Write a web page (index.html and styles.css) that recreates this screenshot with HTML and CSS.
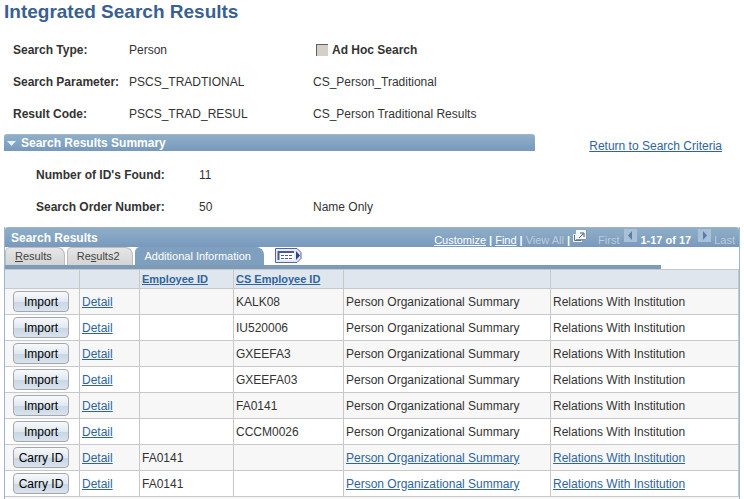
FILE: index.html
```html
<!DOCTYPE html>
<html lang="en">
<head>
    <meta charset="UTF-8">
    <title>Integrated Search Results</title>
    <link rel="stylesheet" href="styles.css">
</head>
<body>
    <h1>Integrated Search Results</h1>

    <dl class="fields">
        <dt>Search Type:</dt>
        <dd>Person</dd>
        <dd class="check">
            <input type="checkbox" id="adhoc" disabled>
            <label for="adhoc">Ad Hoc Search</label>
        </dd>
        <dt>Search Parameter:</dt>
        <dd>PSCS_TRADTIONAL</dd>
        <dd>CS_Person_Traditional</dd>
        <dt>Result Code:</dt>
        <dd>PSCS_TRAD_RESUL</dd>
        <dd>CS_Person Traditional Results</dd>
    </dl>

    <div class="summary-head">
        <h2 class="bar">
            <svg width="9" height="5" viewBox="0 0 9 5"><path d="M0 0h9L4.500 5z" fill="#e4f4fa"/></svg>
            Search Results Summary
        </h2>
        <a href="#">Return to Search Criteria</a>
    </div>
    <dl class="fields summary">
        <dt>Number of ID's Found:</dt>
        <dd>11</dd>
        <dd></dd>
        <dt>Search Order Number:</dt>
        <dd>50</dd>
        <dd>Name Only</dd>
    </dl>

    <div class="results">
        <div class="bar results-bar">
            <h2>Search Results</h2>
            <div class="nav">
                <a href="#">Customize</a>
                <b>|</b>
                <a href="#">Find</a>
                <b>|</b>
                <span class="off">View All</span>
                <b>|</b>
                <a href="#" class="popup" aria-label="Open in new window">
                    <svg width="14" height="12" viewBox="0 0 14 12">
                        <path d="M0 4h9v8H0z" fill="#eef3f7"/>
                        <path d="M1.500 5v5.500h7" fill="none" stroke="#5d7183"/>
                        <path d="M3 0h11v10H3z" fill="#f4f7f9"/>
                        <path d="M13.500 0v9.500H3" fill="none" stroke="#8095a6"/>
                        <path d="M6 8l4-4M7 3h4v4" fill="none" stroke="#405569"/>
                    </svg>
                </a>
                <span class="off first">First</span>
                <button class="page" disabled aria-label="Previous"><svg width="13" height="13" viewBox="0 0 13 13"><path d="M8 2v9L4 6.500z" fill="#5580a8"/></svg></button>
                <b class="count">1-17 of 17</b>
                <button class="page" disabled aria-label="Next"><svg width="13" height="13" viewBox="0 0 13 13"><path d="M5 2v9l4-4.500z" fill="#4f80b4"/></svg></button>
                <span class="off">Last</span>
            </div>
        </div>
        <div class="tabs">
            <a href="#" class="tab"><u>R</u>esults</a>
            <a href="#" class="tab">Re<u>s</u>ults2</a>
            <a href="#" class="tab active">Additional Information</a>
            <button class="showall" aria-label="Show all columns">
                <svg width="27" height="15" viewBox="0 0 27 15">
                    <path d="M.5.5H22l4 4v6l-4 4H.5z" fill="#e2eafc" stroke="#5a668c"/>
                    <path d="M3 3h16v9H3z" fill="#fff"/>
                    <path d="M3.500 12V4H19" fill="none" stroke="#4a5a98" stroke-width="2"/>
                    <path d="M6 7.500h3m1 0h3m1 0h3M6 10.500h3m1 0h3m1 0h3" stroke="#4a5a98"/>
                    <path d="M21 3v9l4-4.500z" fill="#2f3f80"/>
                </svg>
            </button>
        </div>
        <table>
            <colgroup>
                <col class="c-act"><col class="c-det"><col class="c-emp"><col class="c-cs"><col class="c-org"><col>
            </colgroup>
            <thead>
                <tr><th></th><th></th><th><a href="#">Employee ID</a></th><th><a href="#">CS Employee ID</a></th><th></th><th></th></tr>
            </thead>
            <tbody>
                <tr><td><button>Import</button></td><td><a href="#">Detail</a></td><td></td><td>KALK08</td><td>Person Organizational Summary</td><td>Relations With Institution</td></tr>
                <tr><td><button>Import</button></td><td><a href="#">Detail</a></td><td></td><td>IU520006</td><td>Person Organizational Summary</td><td>Relations With Institution</td></tr>
                <tr><td><button>Import</button></td><td><a href="#">Detail</a></td><td></td><td>GXEEFA3</td><td>Person Organizational Summary</td><td>Relations With Institution</td></tr>
                <tr><td><button>Import</button></td><td><a href="#">Detail</a></td><td></td><td>GXEEFA03</td><td>Person Organizational Summary</td><td>Relations With Institution</td></tr>
                <tr><td><button>Import</button></td><td><a href="#">Detail</a></td><td></td><td>FA0141</td><td>Person Organizational Summary</td><td>Relations With Institution</td></tr>
                <tr><td><button>Import</button></td><td><a href="#">Detail</a></td><td></td><td>CCCM0026</td><td>Person Organizational Summary</td><td>Relations With Institution</td></tr>
                <tr><td><button>Carry ID</button></td><td><a href="#">Detail</a></td><td>FA0141</td><td></td><td><a href="#">Person Organizational Summary</a></td><td><a href="#">Relations With Institution</a></td></tr>
                <tr><td><button>Carry ID</button></td><td><a href="#">Detail</a></td><td>FA0141</td><td></td><td><a href="#">Person Organizational Summary</a></td><td><a href="#">Relations With Institution</a></td></tr>
            </tbody>
        </table>
    </div>
</body>
</html>
```
FILE: styles.css
```css
*{
    box-sizing:border-box;
    margin:0;
    padding:0;
}
body{
    padding:0 4px;
    font:12px/16px "Liberation Sans",Arial,sans-serif;
    color:#333;
    background:#fff;
}
a{
    color:#2f659c;
}
h1{
    height:34px;
    font-size:19px;
    line-height:24px;
    color:#3a5f92;
}
h2{
    font-size:12px;
}
.fields{
    display:grid;
    grid-template-columns:116px 184px 1fr;
    grid-auto-rows:32px;
    align-items:center;
    padding-left:9px;
}
.fields dt{
    font-weight:bold;
}
.fields .check{
    display:flex;
    align-items:center;
    gap:4px;
    padding-left:3px;
    font-weight:bold;
}
.check input{
    appearance:none;
    width:12px;
    height:12px;
    background:#d4d0c8;
    border:0 solid #606060;
    border-width:1px 0 0 1px;
}
.bar{
    color:#fff;
    background:linear-gradient(#8fafc8,#7899bd);
    border-top:1px solid #a5b3c0;
    border-radius:3px 3px 0 0;
}
.summary-head{
    display:grid;
    grid-template-columns:1fr auto;
    column-gap:54px;
    padding:4px 18px 0 0;
}
.summary-head .bar{
    height:17px;
    padding-left:3px;
    display:flex;
    align-items:center;
    gap:5px;
}
.summary-head a{
    margin-top:4px;
}
.summary{
    grid-template-columns:163px 114px 1fr;
    padding:5px 0 4px 32px;
}
.results{
    padding-bottom:2px;
    border:1px solid #9ab5cf;
    border-width:0 1px;
    background:#f7f7f7;
}
.results-bar{
    display:flex;
    justify-content:space-between;
    align-items:center;
    height:20px;
    padding:0 4px 0 6px;
}
.nav{
    display:flex;
    align-items:center;
    gap:3px;
    font-size:11px;
    padding-top:4px;
}
.nav a{
    color:#fff;
}
.off{
    color:#bfcbd8;
}
.popup{
    margin-bottom:7px;
}
.popup svg,.page svg,.showall svg{
    display:block;
}
.first{
    margin:0 2px 0 8px;
}
.page{
    width:13px;
    height:13px;
    margin-bottom:8px;
    border:0;
    background:#a9c0d6;
}
.count{
    padding-right:4px;
}
.tabs{
    display:flex;
    align-items:flex-end;
    gap:2px;
    height:22px;
    background:linear-gradient(#7b9bb8,#7b9bb8) 0 100%/656px 4px no-repeat #fff;
    padding-bottom:4px;
}
.tab{
    height:18px;
    padding:0 12px 0 9px;
    border:1px solid #bcbcbc;
    border-bottom:0;
    border-radius:5px 8px 0 0;
    background:linear-gradient(#e6e6e6,#d4d4d4);
    color:#444;
    font-size:11px;
    line-height:17px;
    text-decoration:none;
}
.tab.active{
    background:#7f9fbe;
    border-color:#7f9fbe;
    color:#fff;
}
.showall{
    height:15px;
    margin:0 0 2px 9px;
    border:0;
    background:none;
}
table{
    width:100%;
    table-layout:fixed;
    border-collapse:separate;
    border-spacing:0;
    border-top:1px solid #c8c8c8;
}
.c-act{ width:75px; }
.c-det{ width:60px; }
.c-emp{ width:94px; }
.c-cs{ width:110px; }
.c-org{ width:207px; }
th,td{
    border-right:1px solid #c8c8c8;
    border-bottom:1px solid #c8c8c8;
    padding:0 2px;
    text-align:left;
    white-space:nowrap;
}
th{
    height:19px;
    background:#dfe6ed;
    font-size:11px;
}
td{
    height:26px;
    background:#fff;
}
tr:nth-child(odd) td{
    background:#f7f7f7;
}
td button{
    display:block;
    width:56px;
    height:21px;
    margin-left:6px;
    border:1px solid #a3a8ae;
    border-radius:4px;
    background:linear-gradient(#f8fafc,#e0e8f0 50%,#c8d5e4 51%,#dae3ec);
    color:#000;
    font:12px/16px "Liberation Sans",Arial,sans-serif;
}
```
